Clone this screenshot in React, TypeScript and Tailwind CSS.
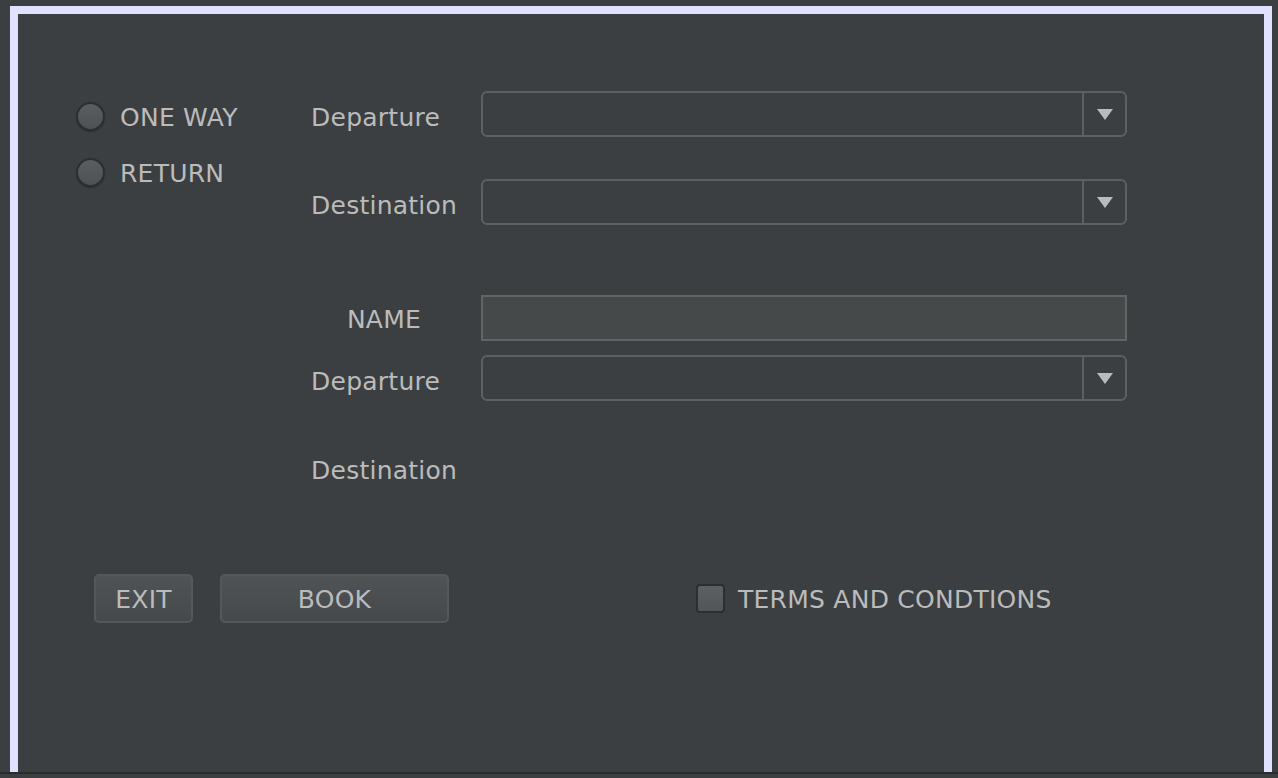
import { useState } from "react";

const font = { fontFamily: '"DejaVu Sans", "Noto Sans", sans-serif' };

function Combo() {
    return (
        <div className="flex h-[46px] w-[646px] rounded-[6px] border-2 border-[#5e6060] bg-[#3c3f41]">
            <div className="flex-1" />
            <div className="flex w-[43px] items-center justify-center border-l-2 border-[#5e6060]">
                <svg width="16" height="11" viewBox="0 0 16 11">
                    <path d="M0 0 H16 L8 11 Z" fill="#bbbbbb" />
                </svg>
            </div>
        </div>
    );
}

function Radio({ label, checked, onClick }: { label: string; checked: boolean; onClick: () => void }) {
    return (
        <button onClick={onClick} className="flex h-[29px] items-center gap-[15px] text-[25px] tracking-[0.01em] text-[#bbbbbb]">
            <span className="flex h-[29px] w-[29px] items-center justify-center rounded-full border-2 border-[#2c2e30] bg-gradient-to-b from-[#5b5e60] to-[#4e5153] shadow-[0_1px_1px_rgba(0,0,0,0.3)]">
                {checked && <span className="h-[9px] w-[9px] rounded-full bg-[#bbbbbb]" />}
            </span>
            <span className="pt-[2px] leading-none">{label}</span>
        </button>
    );
}

export default function App() {
    const [trip, setTrip] = useState<string | null>(null);
    const [terms, setTerms] = useState(false);
    const [name, setName] = useState("");

    return (
        <div className="h-[778px] w-[1278px] overflow-hidden bg-[#3c3f41]" style={font}>
            <div className="ml-[10px] mt-[6px] h-[766px] w-[1262px] border-x-8 border-t-8 border-[#e0e0ff] bg-[#3c3f41]">
                <div className="flex pt-[77px]">
                    <div className="w-[293px] pl-[58px] pt-[11px]">
                        <div className="flex flex-col items-start gap-[27px]">
                            <Radio label="ONE WAY" checked={trip === "one"} onClick={() => setTrip("one")} />
                            <Radio label="RETURN" checked={trip === "return"} onClick={() => setTrip("return")} />
                        </div>
                    </div>
                    <div className="flex flex-col text-[25px] tracking-[0.01em] text-[#bbbbbb]">
                        <div className="flex h-[46px] items-center gap-[24px]">
                            <span className="w-[146px] pt-[7px]">Departure</span>
                            <Combo />
                        </div>
                        <div className="mt-[42px] flex h-[46px] items-center gap-[24px]">
                            <span className="w-[146px] pt-[7px]">Destination</span>
                            <Combo />
                        </div>
                        <div className="mt-[70px] flex h-[46px] items-center gap-[24px]">
                            <span className="w-[146px] pt-[4px] text-center">NAME</span>
                            <input
                                value={name}
                                onChange={(e) => setName(e.target.value)}
                                className="h-[46px] w-[646px] border-2 border-[#646464] bg-[#45494a] px-2 text-[20px] text-[#bbbbbb] outline-none"
                            />
                        </div>
                        <div className="mt-[14px] flex h-[46px] items-center gap-[24px]">
                            <span className="w-[146px] pt-[7px]">Departure</span>
                            <Combo />
                        </div>
                        <div className="mt-[45px] flex h-[46px] items-center">
                            <span className="w-[146px] pt-[3px]">Destination</span>
                        </div>
                    </div>
                </div>
                <div className="mt-[82px] flex items-center pl-[76px] text-[25px] tracking-[0.01em] text-[#bbbbbb]">
                    <button className="h-[49px] w-[99px] rounded-[5px] border-2 border-[#54585a] bg-gradient-to-b from-[#4f5355] to-[#46494b] pt-[2px]">
                        EXIT
                    </button>
                    <button className="ml-[27px] h-[49px] w-[229px] rounded-[5px] border-2 border-[#54585a] bg-gradient-to-b from-[#4f5355] to-[#46494b] pt-[2px]">
                        BOOK
                    </button>
                    <button onClick={() => setTerms(!terms)} className="ml-[247px] flex items-center gap-[13px]">
                        <span className="flex h-[29px] w-[29px] items-center justify-center rounded-[4px] border-2 border-[#2c2e30] bg-gradient-to-b from-[#5e6163] to-[#525557]">
                            {terms && (
                                <svg width="16" height="14" viewBox="0 0 16 14">
                                    <path d="M2 7 L6 11 L14 2" stroke="#bbbbbb" strokeWidth="2.5" fill="none" />
                                </svg>
                            )}
                        </span>
                        <span className="pt-[2px]">TERMS AND CONDTIONS</span>
                    </button>
                </div>
            </div>
            <div className="h-[2px] bg-[#2b2b2b]" />
        </div>
    );
}
